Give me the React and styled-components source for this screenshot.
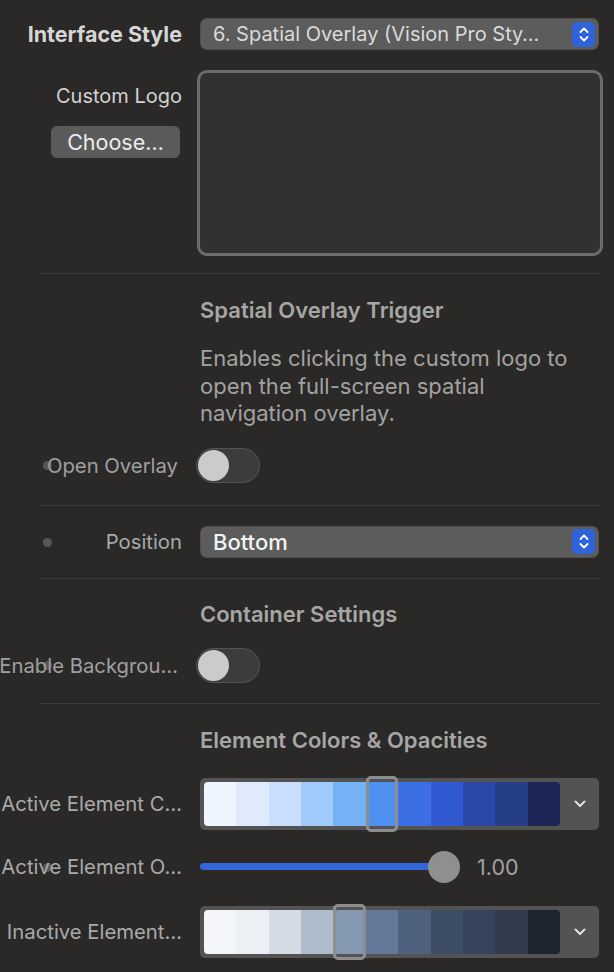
import React from 'react'
import styled, { createGlobalStyle } from 'styled-components'

const GlobalStyle = createGlobalStyle`
  html, body {
    margin: 0;
    padding: 0;
    background: #2a2927;
  }
  body {
    font-family: Inter, "Noto Sans", "Liberation Sans", sans-serif;
    overflow: hidden;
  }
`

const activeColors = ['#eef5ff', '#dfebfc', '#c9defc', '#a0cbfb', '#74b1f5', '#4f8fef', '#3b6fe2', '#3159d1', '#2a48a8', '#253f86', '#1b2656']
const inactiveColors = ['#f4f6fa', '#eceff4', '#d4dbe5', '#aebbcd', '#8598b1', '#64789a', '#4e617e', '#3e4d66', '#36435a', '#323b4d', '#1f2431']

const Panel = styled.div`
  width: 614px;
  height: 972px;
  padding-top: 18px;
  box-sizing: border-box;
  background: #2a2927;
  color: #b4b4b4;
  font-size: 20px;
  overflow: hidden;
`

const Row = styled.div`
  position: relative;
  display: grid;
  grid-template-columns: 182px 1fr;
  column-gap: 18px;
  align-items: ${p => p.$top ? 'start' : 'center'};
  padding-right: 15px;
  margin-top: ${p => p.$mt || 0}px;
`

const Label = styled.div`
  display: flex;
  justify-content: flex-end;
  white-space: nowrap;
  min-width: 0;
  position: relative;
  z-index: 1;
  color: ${p => p.$color || '#a9a9a9'};
  font-weight: ${p => p.$bold ? 700 : 400};
  font-size: ${p => p.$bold ? 21.5 : 20.3}px;
  padding-right: ${p => p.$pr || 0}px;
`

const Dot = styled.span`
  position: absolute;
  left: 43px;
  top: 50%;
  width: 9px;
  height: 9px;
  margin-top: -4px;
  border-radius: 50%;
  background: #575757;
`

const LabelStack = styled.div`
  display: flex;
  flex-direction: column;
  align-items: flex-end;
  gap: 18px;
  padding-top: 14px;
  color: #d2d2d2;
`

const SelectBox = styled.div`
  height: 32px;
  border-radius: 7px;
  background: #5c5c5c;
  box-shadow: inset 0 0 0 1px rgba(0, 0, 0, 0.12);
  display: flex;
  align-items: center;
  padding: 0 4px 0 13px;
  color: ${p => p.$bright ? '#f3f3f3' : '#dadada'};
  font-size: ${p => p.$bright ? 22 : 20}px;
  font-weight: ${p => p.$bright ? 500 : 400};
`

const SelectText = styled.span`
  flex: 1;
  white-space: nowrap;
  overflow: hidden;
`

const Stepper = styled.span`
  width: 23px;
  height: 25px;
  border-radius: 5px;
  background: #2f63d9;
  display: flex;
  align-items: center;
  justify-content: center;
`

const ChooseButton = styled.button`
  width: 129px;
  height: 32px;
  border: none;
  border-radius: 6px;
  background: #5b5b5b;
  color: #ececec;
  font-family: inherit;
  font-size: 21.5px;
  padding: 0;
  margin-right: 2px;
`

const LogoWell = styled.div`
  height: 186px;
  margin: 0 -4px 0 -3px;
  border: 3px solid #6c6c6c;
  border-radius: 10px;
  background: #313130;
  box-sizing: border-box;
`

const Divider = styled.div`
  height: 1px;
  background: #3e3d3b;
  margin: ${p => p.$mt}px 14px 0 40px;
`

const Heading = styled.div`
  margin: ${p => p.$mt}px 0 0 200px;
  line-height: 26px;
  font-size: 22px;
  font-weight: 600;
  color: #a6a6a6;
`

const Description = styled.p`
  margin: 22px 20px 0 200px;
  font-size: 22px;
  line-height: 27.5px;
  color: #a2a2a2;
`

const Toggle = styled.div`
  width: 64px;
  height: 35px;
  box-sizing: border-box;
  border-radius: 18px;
  background: #3d3c3a;
  border: 1px solid #545452;
  display: flex;
  align-items: center;
  padding-left: 1px;
  margin-left: -4px;
`

const Knob = styled.span`
  width: 31px;
  height: 31px;
  border-radius: 50%;
  background: #cbcbcb;
`

const Picker = styled.div`
  height: 52px;
  border-radius: 5px;
  background: #535353;
  display: flex;
  align-items: center;
  padding-left: 4px;
`

const Swatches = styled.div`
  display: flex;
  width: 356px;
  height: 44px;
  border-radius: 4px;
`

const Swatch = styled.span`
  position: relative;
  flex: 1;
  background: ${p => p.$color};
  &:first-child { border-radius: 4px 0 0 4px; }
  &:last-child { border-radius: 0 4px 4px 0; }
  ${p => p.$selected && `
    &::after {
      content: "";
      position: absolute;
      left: 0;
      right: 0;
      top: -6px;
      bottom: -6px;
      border: 3px solid #8e8e8e;
      border-radius: 5px;
    }
  `}
`

const ChevronCell = styled.span`
  flex: 1;
  display: flex;
  justify-content: center;
  align-items: center;
`

const SliderWrap = styled.div`
  display: flex;
  align-items: center;
  height: 32px;
`

const Track = styled.div`
  position: relative;
  width: 244px;
  height: 7px;
  border-radius: 4px;
  background: #3068d9;
`

const Thumb = styled.span`
  position: absolute;
  right: -16px;
  top: 50%;
  width: 32px;
  height: 32px;
  margin-top: -16px;
  border-radius: 50%;
  background: #8f8f8f;
`

const Value = styled.span`
  margin-left: 33px;
  font-size: 21.5px;
  color: #a2a2a2;
`

const StepperIcon = () => (
  <Stepper>
    <svg width="12" height="17" viewBox="0 0 12 17" fill="none" stroke="#fff" strokeWidth="1.8" strokeLinecap="round" strokeLinejoin="round">
      <path d="M2.5 6 L6 2.5 L9.5 6" />
      <path d="M2.5 11 L6 14.5 L9.5 11" />
    </svg>
  </Stepper>
)

const Select = ({ value, bright }) => (
  <SelectBox $bright={bright}>
    <SelectText>{value}</SelectText>
    <StepperIcon />
  </SelectBox>
)

const ColorPicker = ({ colors, selected }) => (
  <Picker>
    <Swatches>
      {colors.map((c, i) => (
        <Swatch key={c} $color={c} $selected={i === selected} />
      ))}
    </Swatches>
    <ChevronCell>
      <svg width="14" height="9" viewBox="0 0 14 9" fill="none" stroke="#e6e6e6" strokeWidth="1.8" strokeLinecap="round" strokeLinejoin="round">
        <path d="M2.5 2.5 L7 7 L11.5 2.5" />
      </svg>
    </ChevronCell>
  </Picker>
)

export default function App() {
  return (
    <Panel>
      <GlobalStyle />
      <Row>
        <Label $bold $color="#d6d6d6">Interface Style</Label>
        <Select value="6. Spatial Overlay (Vision Pro Sty…" />
      </Row>

      <Row $top $mt={20}>
        <LabelStack>
          <span>Custom Logo</span>
          <ChooseButton>Choose…</ChooseButton>
        </LabelStack>
        <LogoWell />
      </Row>

      <Divider $mt={17} />

      <Heading $mt={23}>Spatial Overlay Trigger</Heading>
      <Description>
        Enables clicking the custom logo to open the full-screen spatial navigation overlay.
      </Description>

      <Row $mt={20}>
        <Dot />
        <Label $color="#a0a0a0" $pr={4}>Open Overlay</Label>
        <Toggle><Knob /></Toggle>
      </Row>

      <Divider $mt={22} />

      <Row $mt={20}>
        <Dot />
        <Label>Position</Label>
        <Select value="Bottom" bright />
      </Row>

      <Divider $mt={20} />

      <Heading $mt={22}>Container Settings</Heading>

      <Row $mt={21}>
        <Dot />
        <Label $color="#a0a0a0" $pr={4}>Enable Backgrou…</Label>
        <Toggle><Knob /></Toggle>
      </Row>

      <Divider $mt={20} />

      <Heading $mt={23}>Element Colors &amp; Opacities</Heading>

      <Row $mt={25}>
        <Label>Active Element C…</Label>
        <ColorPicker colors={activeColors} selected={5} />
      </Row>

      <Row $mt={21}>
        <Dot />
        <Label>Active Element O…</Label>
        <SliderWrap>
          <Track><Thumb /></Track>
          <Value>1.00</Value>
        </SliderWrap>
      </Row>

      <Row $mt={23}>
        <Label>Inactive Element…</Label>
        <ColorPicker colors={inactiveColors} selected={4} />
      </Row>
    </Panel>
  )
}
